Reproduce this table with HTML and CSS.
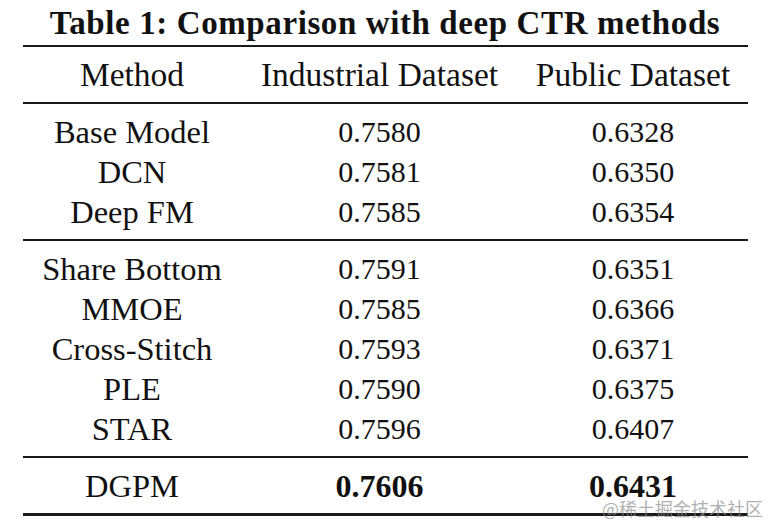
FILE: index.html
```html
<!DOCTYPE html>
<html>
<head>
<meta charset="utf-8">
<link rel="stylesheet" href="styles.css">
</head>
<body>
<div class="page">
  <h1 class="caption">Table 1: Comparison with deep CTR methods</h1>
  <table class="results">
    <colgroup>
      <col class="c-method">
      <col class="c-ind">
      <col class="c-pub">
    </colgroup>
    <thead>
      <tr><th>Method</th><th>Industrial Dataset</th><th>Public Dataset</th></tr>
    </thead>
    <tbody class="group">
      <tr class="first"><td>Base Model</td><td class="num">0.7580</td><td class="num">0.6328</td></tr>
      <tr><td>DCN</td><td class="num">0.7581</td><td class="num">0.6350</td></tr>
      <tr class="last"><td>Deep FM</td><td class="num">0.7585</td><td class="num">0.6354</td></tr>
    </tbody>
    <tbody class="group">
      <tr class="first"><td>Share Bottom</td><td class="num">0.7591</td><td class="num">0.6351</td></tr>
      <tr><td>MMOE</td><td class="num">0.7585</td><td class="num">0.6366</td></tr>
      <tr><td>Cross-Stitch</td><td class="num">0.7593</td><td class="num">0.6371</td></tr>
      <tr><td>PLE</td><td class="num">0.7590</td><td class="num">0.6375</td></tr>
      <tr class="last"><td>STAR</td><td class="num">0.7596</td><td class="num">0.6407</td></tr>
    </tbody>
    <tbody class="group final">
      <tr class="first last"><td>DGPM</td><td class="num best">0.7606</td><td class="num best">0.6431</td></tr>
    </tbody>
  </table>
  <div class="watermark">@稀土掘金技术社区</div>
</div>
</body>
</html>
```
FILE: styles.css
```css
html, body {
  margin: 0;
  padding: 0;
  background: #ffffff;
}
.page {
  position: relative;
  width: 770px;
  height: 522px;
  overflow: hidden;
  font-family: "Liberation Serif", "Times New Roman", serif;
  color: #111111;
}
.caption {
  margin: 0;
  padding-top: 6px;
  height: 45px;
  box-sizing: border-box;
  font-size: 33px;
  line-height: 35px;
  font-weight: bold;
  text-align: center;
  letter-spacing: 0.6px;
  white-space: nowrap;
}
.results {
  margin: 0 0 0 23px;
  width: 725px;
  border-collapse: collapse;
  font-size: 32.5px;
}
.c-method { width: 218px; }
.c-ind { width: 277px; }
.c-pub { width: 230px; }
.results thead tr {
  border-top: 2px solid #1a1a1a;
  border-bottom: 2px solid #1a1a1a;
}
.results th {
  font-weight: normal;
  font-size: 33.5px;
  height: 55px;
  padding: 0;
  line-height: 40px;
  text-align: center;
  vertical-align: middle;
  white-space: nowrap;
}
.results td {
  padding: 0;
  height: 40px;
  line-height: 40px;
  text-align: center;
  white-space: nowrap;
}
.results td.num { font-size: 30px; }
.results td.best { font-size: 32px; font-weight: bold; }
.results tr.first td { padding-top: 8px; }
.results tr.last td { padding-bottom: 7px; }
.group + .group { border-top: 2px solid #1a1a1a; }
.group.final { border-bottom: 3px solid #1a1a1a; }
.watermark {
  position: absolute;
  right: 7px;
  bottom: 4px;
  font-family: "Noto Sans CJK SC", sans-serif;
  font-size: 18px;
  line-height: 20px;
  color: rgba(140, 140, 140, 0.7);
}
```
